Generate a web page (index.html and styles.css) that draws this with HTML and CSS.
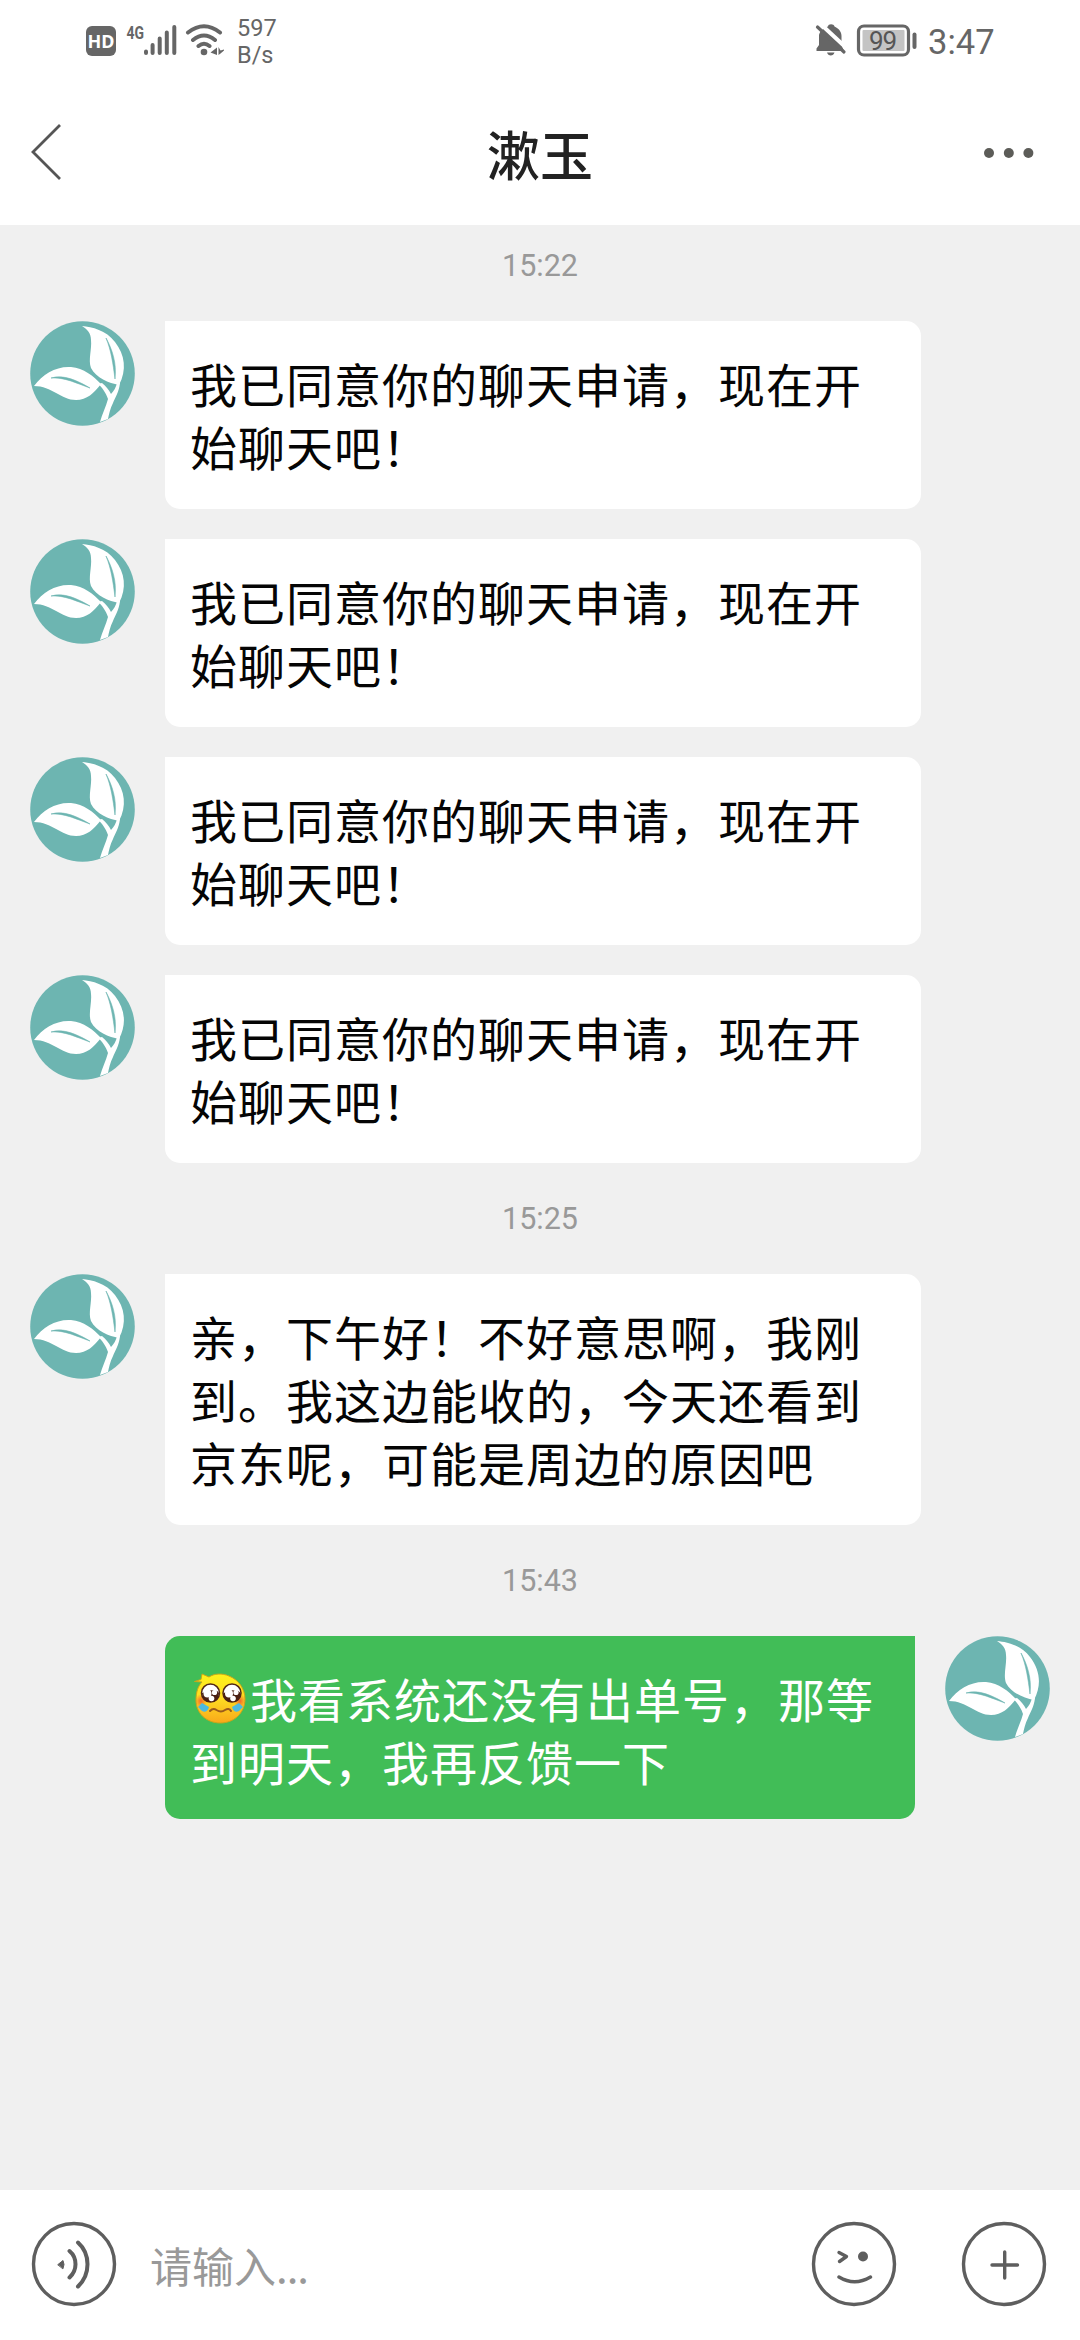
FILE: index.html
```html
<!DOCTYPE html>
<html lang="zh-CN">
<head>
<meta charset="utf-8">
<title>漱玉</title>
<link rel="stylesheet" href="styles.css">
</head>
<body>
<svg class="defs" width="0" height="0" aria-hidden="true">
  <symbol id="leaf" viewBox="0 0 105 105">
    <circle cx="52.5" cy="52.5" r="52.3" fill="#6db5b1"/>
    <path d="M52 5 C62 6 76 9 85 21 C95 34 97 49 89 64 C79 62 66 57 61 47 C58 39 62 28 61 19 C61 12 57 8 52 5Z" fill="#fff"/>
    <path d="M4 65 C13 53 26 45 41 46 C54 47 63 55 71 63 C64 72 57 79 46 79 C31 79 22 65 4 65Z" fill="#fff"/>
    <path d="M76 17 C82 28 87 42 85 58 C83 42 81 29 76 17Z" fill="#6db5b1" stroke="#6db5b1" stroke-width=".6"/>
    <path d="M21 57 C34 53 48 60 60 67 C46 62 34 56 21 57Z" fill="#6db5b1" stroke="#6db5b1" stroke-width=".6"/>
    <path d="M68 63 L72 62 C76 65 79 69 81 73 C84 70 86 66 87 62 L90 62 C89 71 85 77 83 82 C80 88 79 93 78 98 L70 101 C72 93 76 86 78 78 C76 72 72 66 68 63Z" fill="#fff"/>
  </symbol>
</svg>
<div class="screen">
  <header class="statusbar">
    <svg class="sb-left" width="156" height="40" viewBox="0 0 156 40" fill="#666">
      <rect x="16" y="6" width="30" height="30" rx="6"/>
      <text class="hd" x="31" y="28" text-anchor="middle">HD</text>
      <text class="fourg" x="56.500" y="18.500" textLength="17.500" lengthAdjust="spacingAndGlyphs">4G</text>
      <g stroke="#666" stroke-width="4" stroke-linecap="round">
        <path d="M76 31.500V33M82.600 25V33M89.700 18.500V33M96.800 12.500V33M104.300 7V33"/>
      </g>
      <g fill="none" stroke="#666" stroke-width="4" stroke-linecap="round">
        <path d="M118 12.500Q134 0 150 12.500M123 20Q134 11 145 20M128.500 26Q134 21.500 139.500 26"/>
      </g>
      <circle cx="134" cy="32" r="3.300"/>
      <path d="M147 27.500V35L140.500 32.500ZM148.500 27V35L150.500 33.500L154 30.500V29.500L150.500 30.500Z"/>
    </svg>
    <div class="speed">597<br>B/s</div>
    <svg class="sb-right" width="104" height="36" viewBox="0 0 104 36">
      <path d="M3.500 30 V27.500 L6 24 V14 C7 9.500 11 7 15 5.500 C15 2.500 21 2.500 21.500 5.500 C26.500 8 28.500 11 28.500 15 V24 L31 30Z" fill="#666"/>
      <path d="M14 31.500H21.500C20.500 35.500 15 35.500 14 31.500Z" fill="#666"/>
      <path d="M6.500 2L34.500 28" stroke="#fff" stroke-width="4"/>
      <path d="M4.500 6L31 31" stroke="#666" stroke-width="3.200" stroke-linecap="round"/>
      <rect x="45.500" y="5" width="50" height="29" rx="5.500" fill="#fff" stroke="#666" stroke-width="3.200"/>
      <rect x="49.500" y="9" width="42" height="21" rx="1" fill="#c4c4c4"/>
      <text class="battery" x="69.500" y="29" text-anchor="middle">99</text>
      <rect x="99.500" y="11.500" width="4" height="16.500" rx="2" fill="#666"/>
    </svg>
    <div class="clock">3:47</div>
  </header>
  <nav class="titlebar">
    <svg class="back" width="40" height="60" viewBox="0 0 40 60"><path d="M32 3L5 30L32 57" fill="none" stroke="#555" stroke-width="2.800"/></svg>
    <h1 class="title">漱玉</h1>
    <svg class="more" width="52" height="12" viewBox="0 0 52 12" fill="#5c5c58"><circle cx="6" cy="6" r="5"/><circle cx="25.800" cy="6" r="5"/><circle cx="45.400" cy="6" r="5"/></svg>
  </nav>
  <main class="chat">
    <time class="stamp first">15:22</time>
    <div class="row"><svg class="avatar"><use href="#leaf"/></svg><p class="bubble">我已同意你的聊天申请，现在开始聊天吧！</p></div>
    <div class="row"><svg class="avatar"><use href="#leaf"/></svg><p class="bubble">我已同意你的聊天申请，现在开始聊天吧！</p></div>
    <div class="row"><svg class="avatar"><use href="#leaf"/></svg><p class="bubble">我已同意你的聊天申请，现在开始聊天吧！</p></div>
    <div class="row"><svg class="avatar"><use href="#leaf"/></svg><p class="bubble">我已同意你的聊天申请，现在开始聊天吧！</p></div>
    <time class="stamp">15:25</time>
    <div class="row"><svg class="avatar"><use href="#leaf"/></svg><p class="bubble">亲，下午好！不好意思啊，我刚到。我这边能收的，今天还看到京东呢，可能是周边的原因吧</p></div>
    <time class="stamp">15:43</time>
    <div class="row mine">
      <p class="bubble"><svg class="emoji" width="60" height="52" viewBox="0 0 60 52">
        <defs><linearGradient id="face" x1="0" y1="0" x2="0" y2="1"><stop offset="0" stop-color="#fff21c"/><stop offset=".5" stop-color="#fddc22"/><stop offset="1" stop-color="#f9a81a"/></linearGradient>
        <radialGradient id="blush"><stop offset="0" stop-color="#f4682c"/><stop offset="1" stop-color="#f4682c" stop-opacity="0"/></radialGradient></defs>
        <path d="M12 9L4.500 8.500L11 6.500L12 1L19 4C24 .5 32 0 39 3C49 7 55 16 55 26C55 40 44 50 30.500 50C16 50 6 40 6 27C6 19 8 13 12 9Z" fill="url(#face)" stroke="#c9a51a" stroke-width="1"/>
        <ellipse cx="11" cy="28" rx="6" ry="7" fill="url(#blush)"/><ellipse cx="50" cy="28" rx="6" ry="7" fill="url(#blush)"/>
        <path d="M12 30L19 34C18 38 15 40 12 38L8 34Z" fill="#4db9df"/><path d="M49 30L42 34C43 38 46 40 49 38L53 34Z" fill="#4db9df"/>
        <circle cx="20.500" cy="20" r="9" fill="#fff" stroke="#512717" stroke-width="1.500"/><circle cx="42" cy="20" r="9" fill="#fff" stroke="#512717" stroke-width="1.500"/>
        <path d="M12 20Q12 29 20.500 29Q29 29 29 20Q27 17 25 18Q20 16 16 19Z" fill="#4a2013"/><path d="M33.500 20Q33.500 29 42 29Q50.500 29 50.500 20Q48 17 46 18Q41 16 37 19Z" fill="#4a2013"/>
        <circle cx="17.500" cy="20.500" r="4" fill="#fff"/><circle cx="24.500" cy="19.500" r="2.600" fill="#fff"/><circle cx="21.500" cy="25.500" r="2.800" fill="#fff"/>
        <circle cx="39" cy="20.500" r="4" fill="#fff"/><circle cx="46" cy="19.500" r="2.600" fill="#fff"/><circle cx="43" cy="25.500" r="2.800" fill="#fff"/>
        <path d="M20 38Q23 34.500 26.500 37Q31 40 35 37Q39 34.500 41 38" fill="none" stroke="#9a5a1c" stroke-width="2" stroke-linecap="round"/>
      </svg>我看系统还没有出单号，那等到明天，我再反馈一下</p>
      <svg class="avatar"><use href="#leaf"/></svg>
    </div>
  </main>
  <footer class="inputbar">
    <svg class="ic" width="86" height="86" viewBox="0 0 86 86" fill="none" stroke="#5e5e5e" stroke-width="3.400" stroke-linecap="round">
      <circle cx="43" cy="43" r="40.500"/>
      <path d="M27 43.500L32 39.500L33 43.500L32 47.500Z" fill="#5e5e5e" stroke-width="1"/>
      <path d="M38.500 30Q44.500 35 44.500 43.300Q44.500 51 38.500 56.500M47 21.500Q56.500 30 56.500 43.300Q56.500 56.500 47 65.500" stroke-width="4"/>
    </svg>
    <div class="field">请输入<span class="dots">...</span></div>
    <svg class="ic" width="86" height="86" viewBox="0 0 86 86" fill="none" stroke="#5e5e5e" stroke-width="3.400" stroke-linecap="round" stroke-linejoin="round">
      <circle cx="43" cy="43" r="40.500"/>
      <path d="M28 31.500L35.500 35.500L28.500 40.500"/>
      <circle cx="52" cy="35.500" r="5" fill="#5e5e5e" stroke="none"/>
      <path d="M28 56Q43.500 65.500 59.500 56"/>
    </svg>
    <svg class="ic" width="86" height="86" viewBox="0 0 86 86" fill="none" stroke="#5e5e5e" stroke-width="3.400" stroke-linecap="round">
      <circle cx="43" cy="43" r="40.500"/>
      <path d="M31 44H56.500M43.700 31V57"/>
    </svg>
  </footer>
</div>
</body>
</html>
```
FILE: styles.css
```css
* { box-sizing: border-box; }
body { margin: 0; background: #fff; font-family: Roboto, "Noto Sans CJK SC", sans-serif; }
.defs { display: block; }
.screen { width: 1080px; height: 2340px; display: flex; flex-direction: column; }
.statusbar { height: 80px; display: flex; align-items: flex-start; color: #666; padding: 0 84px 0 70px; }
.sb-left { margin-top: 20px; }
.hd { font: 700 18px "Noto Sans", sans-serif; fill: #fff; }
.fourg { font: 700 18px Roboto, sans-serif; }
.speed { margin: 15px 0 0 11px; font-size: 23.500px; line-height: 27px; }
.sb-right { margin: 21px 0 0 auto; }
.battery { font: 400 26px Roboto, sans-serif; letter-spacing: -1px; fill: #555; }
.clock { margin: 22px 0 0 11px; width: 68px; font-size: 34.500px; line-height: 41px; white-space: nowrap; }
.titlebar { height: 145px; display: grid; grid-template-columns: 1fr auto 1fr; align-items: center; padding: 0 45px 0 28px; }
.back { margin-top: -1px; }
.title { margin: 0 -8px 0 9px; font: 500 53px/70px "Noto Sans CJK SC", sans-serif; color: #222; }
.more { justify-self: end; }
.chat { flex: 1; background: #f0f0f0; }
.stamp { display: block; height: 111px; padding-top: 35px; text-align: center; font-size: 30.500px; line-height: 42px; color: #999; }
.stamp.first { height: 96px; padding-top: 20px; }
.row { display: flex; align-items: flex-start; gap: 30px; padding: 0 30px; }
.row + .row { margin-top: 30px; }
.avatar { width: 105px; height: 105px; flex: none; }
.bubble { margin: 0; width: 756px; padding: 30px 24px 32px 25px; border-radius: 0 15px 15px 15px; background: #fff; color: #050505; font: 400 47px/63px "Noto Sans CJK SC", sans-serif; letter-spacing: 1px; }
.mine { justify-content: flex-end; }
.mine .bubble { width: 750px; height: 183px; padding: 30px 24px 0 25px; border-radius: 15px 0 15px 15px; background: #41bd57; color: #fff; }
.emoji { display: inline-block; vertical-align: -7px; }
.inputbar { height: 150px; display: flex; align-items: center; background: #fff; padding: 0 33px 2px 31px; }
.ic { flex: none; }
.ic + .ic { margin-left: 64px; }
.field { flex: 1; margin: 2px 0 0 33px; font: 400 42px/60px "Noto Sans CJK SC", sans-serif; color: #999; }
.dots { letter-spacing: -1px; }
```
